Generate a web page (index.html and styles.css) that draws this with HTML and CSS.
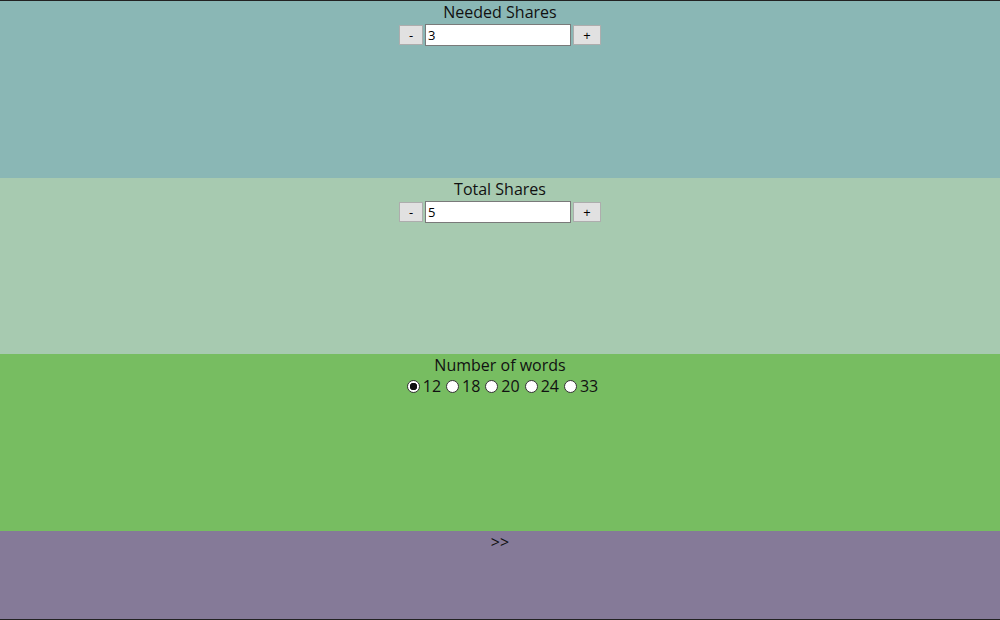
FILE: index.html
```html
<!DOCTYPE html>
<html lang="en">
<head>
  <meta charset="UTF-8" />
  <title>Shares</title>
  <link rel="stylesheet" href="styles.css">
</head>
<body>
  <div class="app">
    <div class="panel needed">
      <div class="label">Needed Shares</div>
      <div class="stepper">
        <button class="step">-</button>
        <input type="text" class="count" value="3" />
        <button class="step">+</button>
      </div>
    </div>

    <div class="panel total">
      <div class="label">Total Shares</div>
      <div class="stepper">
        <button class="step">-</button>
        <input type="text" class="count" value="5" />
        <button class="step">+</button>
      </div>
    </div>

    <div class="panel words">
      <div class="label">Number of words</div>
      <div class="choices">
        <label><input type="radio" name="words" checked />12</label>
        <label><input type="radio" name="words" />18</label>
        <label><input type="radio" name="words" />20</label>
        <label><input type="radio" name="words" />24</label>
        <label><input type="radio" name="words" />33</label>
      </div>
    </div>

    <div class="panel next">
      <div class="label">&gt;&gt;</div>
    </div>
  </div>
</body>
</html>
```

FILE: styles.css
```css
html, body {
  margin: 0;
  height: 100%;
}
body {
  font-family: "Open Sans", sans-serif;
  font-size: 16px;
  color: #111;
}
.app {
  height: 100%;
  box-sizing: border-box;
  border-top: 1px solid #222;
  border-bottom: 1px solid #222;
  display: grid;
  grid-template-rows: 177px 176px 177px 1fr;
}
.panel {
  text-align: center;
}
.panel.needed { background-color: #8ab7b5; }
.panel.total  { background-color: #a7cab0; }
.panel.words  { background-color: #77bd61; }
.panel.next   { background-color: #857a98; }
.label {
  line-height: 22px;
}
.stepper {
  margin-top: 1px;
  display: flex;
  justify-content: center;
  align-items: center;
  gap: 2px;
}
.step {
  width: 24px;
  height: 20px;
  padding: 0;
  font-family: "Open Sans", sans-serif;
  font-size: 13px;
  color: #000;
  background-color: #e1e1e1;
  border: 1px solid #adadad;
  border-radius: 0;
}
.step:last-child {
  width: 28px;
}
.count {
  width: 146px;
  height: 22px;
  box-sizing: border-box;
  margin: 0;
  padding: 0 2px;
  font-family: "Open Sans", sans-serif;
  font-size: 13px;
  color: #000;
  background: #fff;
  border: 1px solid #7a7a7a;
}
.choices {
  display: flex;
  justify-content: center;
  line-height: 20px;
}
.choices label {
  display: flex;
  align-items: center;
}
.choices input {
  appearance: none;
  box-sizing: border-box;
  margin: 1px 3px 0 5px;
  width: 13px;
  height: 13px;
  border: 1px solid #333;
  border-radius: 50%;
  background: #fff;
}
.choices input:checked {
  background: radial-gradient(circle, #111 0 3.5px, #fff 4px);
}
```
